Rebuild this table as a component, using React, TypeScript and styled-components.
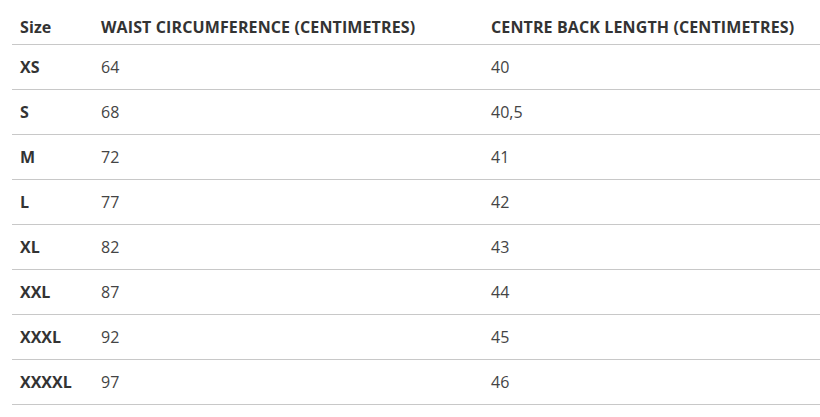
import styled, { createGlobalStyle } from "styled-components";

const GlobalStyle = createGlobalStyle`
  body {
    margin: 0;
    background: #fff;
    font-family: "Open Sans", "Liberation Sans", sans-serif;
    overflow: hidden;
  }
`;

const Wrapper = styled.div`
  padding: 0 0 0 12px;
`;

const Table = styled.table`
  width: 808px;
  border-collapse: collapse;
  table-layout: fixed;
  color: #333;
`;

const HeadCell = styled.th<{ $width: number }>`
  box-sizing: border-box;
  width: ${(p) => p.$width}px;
  text-align: left;
  font-size: 16px;
  font-weight: 700;
  line-height: 18px;
  letter-spacing: 0.12px;
  padding: 18px 8px 8px;
  border-bottom: 1px solid #c8c8c8;
  white-space: nowrap;
`;

const Row = styled.tr`
  height: 45px;
  border-bottom: 1px solid #c8c8c8;
`;

const SizeCell = styled.td`
  padding: 0 8px;
  font-size: 16px;
  font-weight: 700;
  color: #333;
`;

const ValueCell = styled.td`
  padding: 0 8px;
  font-size: 16px;
  font-weight: 400;
  color: #444;
`;

const sizes = [
  { size: "XS", waist: "64", back: "40" },
  { size: "S", waist: "68", back: "40,5" },
  { size: "M", waist: "72", back: "41" },
  { size: "L", waist: "77", back: "42" },
  { size: "XL", waist: "82", back: "43" },
  { size: "XXL", waist: "87", back: "44" },
  { size: "XXXL", waist: "92", back: "45" },
  { size: "XXXXL", waist: "97", back: "46" },
];

export default function App() {
  return (
    <>
      <GlobalStyle />
      <Wrapper>
        <Table>
          <thead>
            <tr>
              <HeadCell $width={81}>Size</HeadCell>
              <HeadCell $width={390}>WAIST CIRCUMFERENCE (CENTIMETRES)</HeadCell>
              <HeadCell $width={337}>CENTRE BACK LENGTH (CENTIMETRES)</HeadCell>
            </tr>
          </thead>
          <tbody>
            {sizes.map((s) => (
              <Row key={s.size}>
                <SizeCell>{s.size}</SizeCell>
                <ValueCell>{s.waist}</ValueCell>
                <ValueCell>{s.back}</ValueCell>
              </Row>
            ))}
          </tbody>
        </Table>
      </Wrapper>
    </>
  );
}
